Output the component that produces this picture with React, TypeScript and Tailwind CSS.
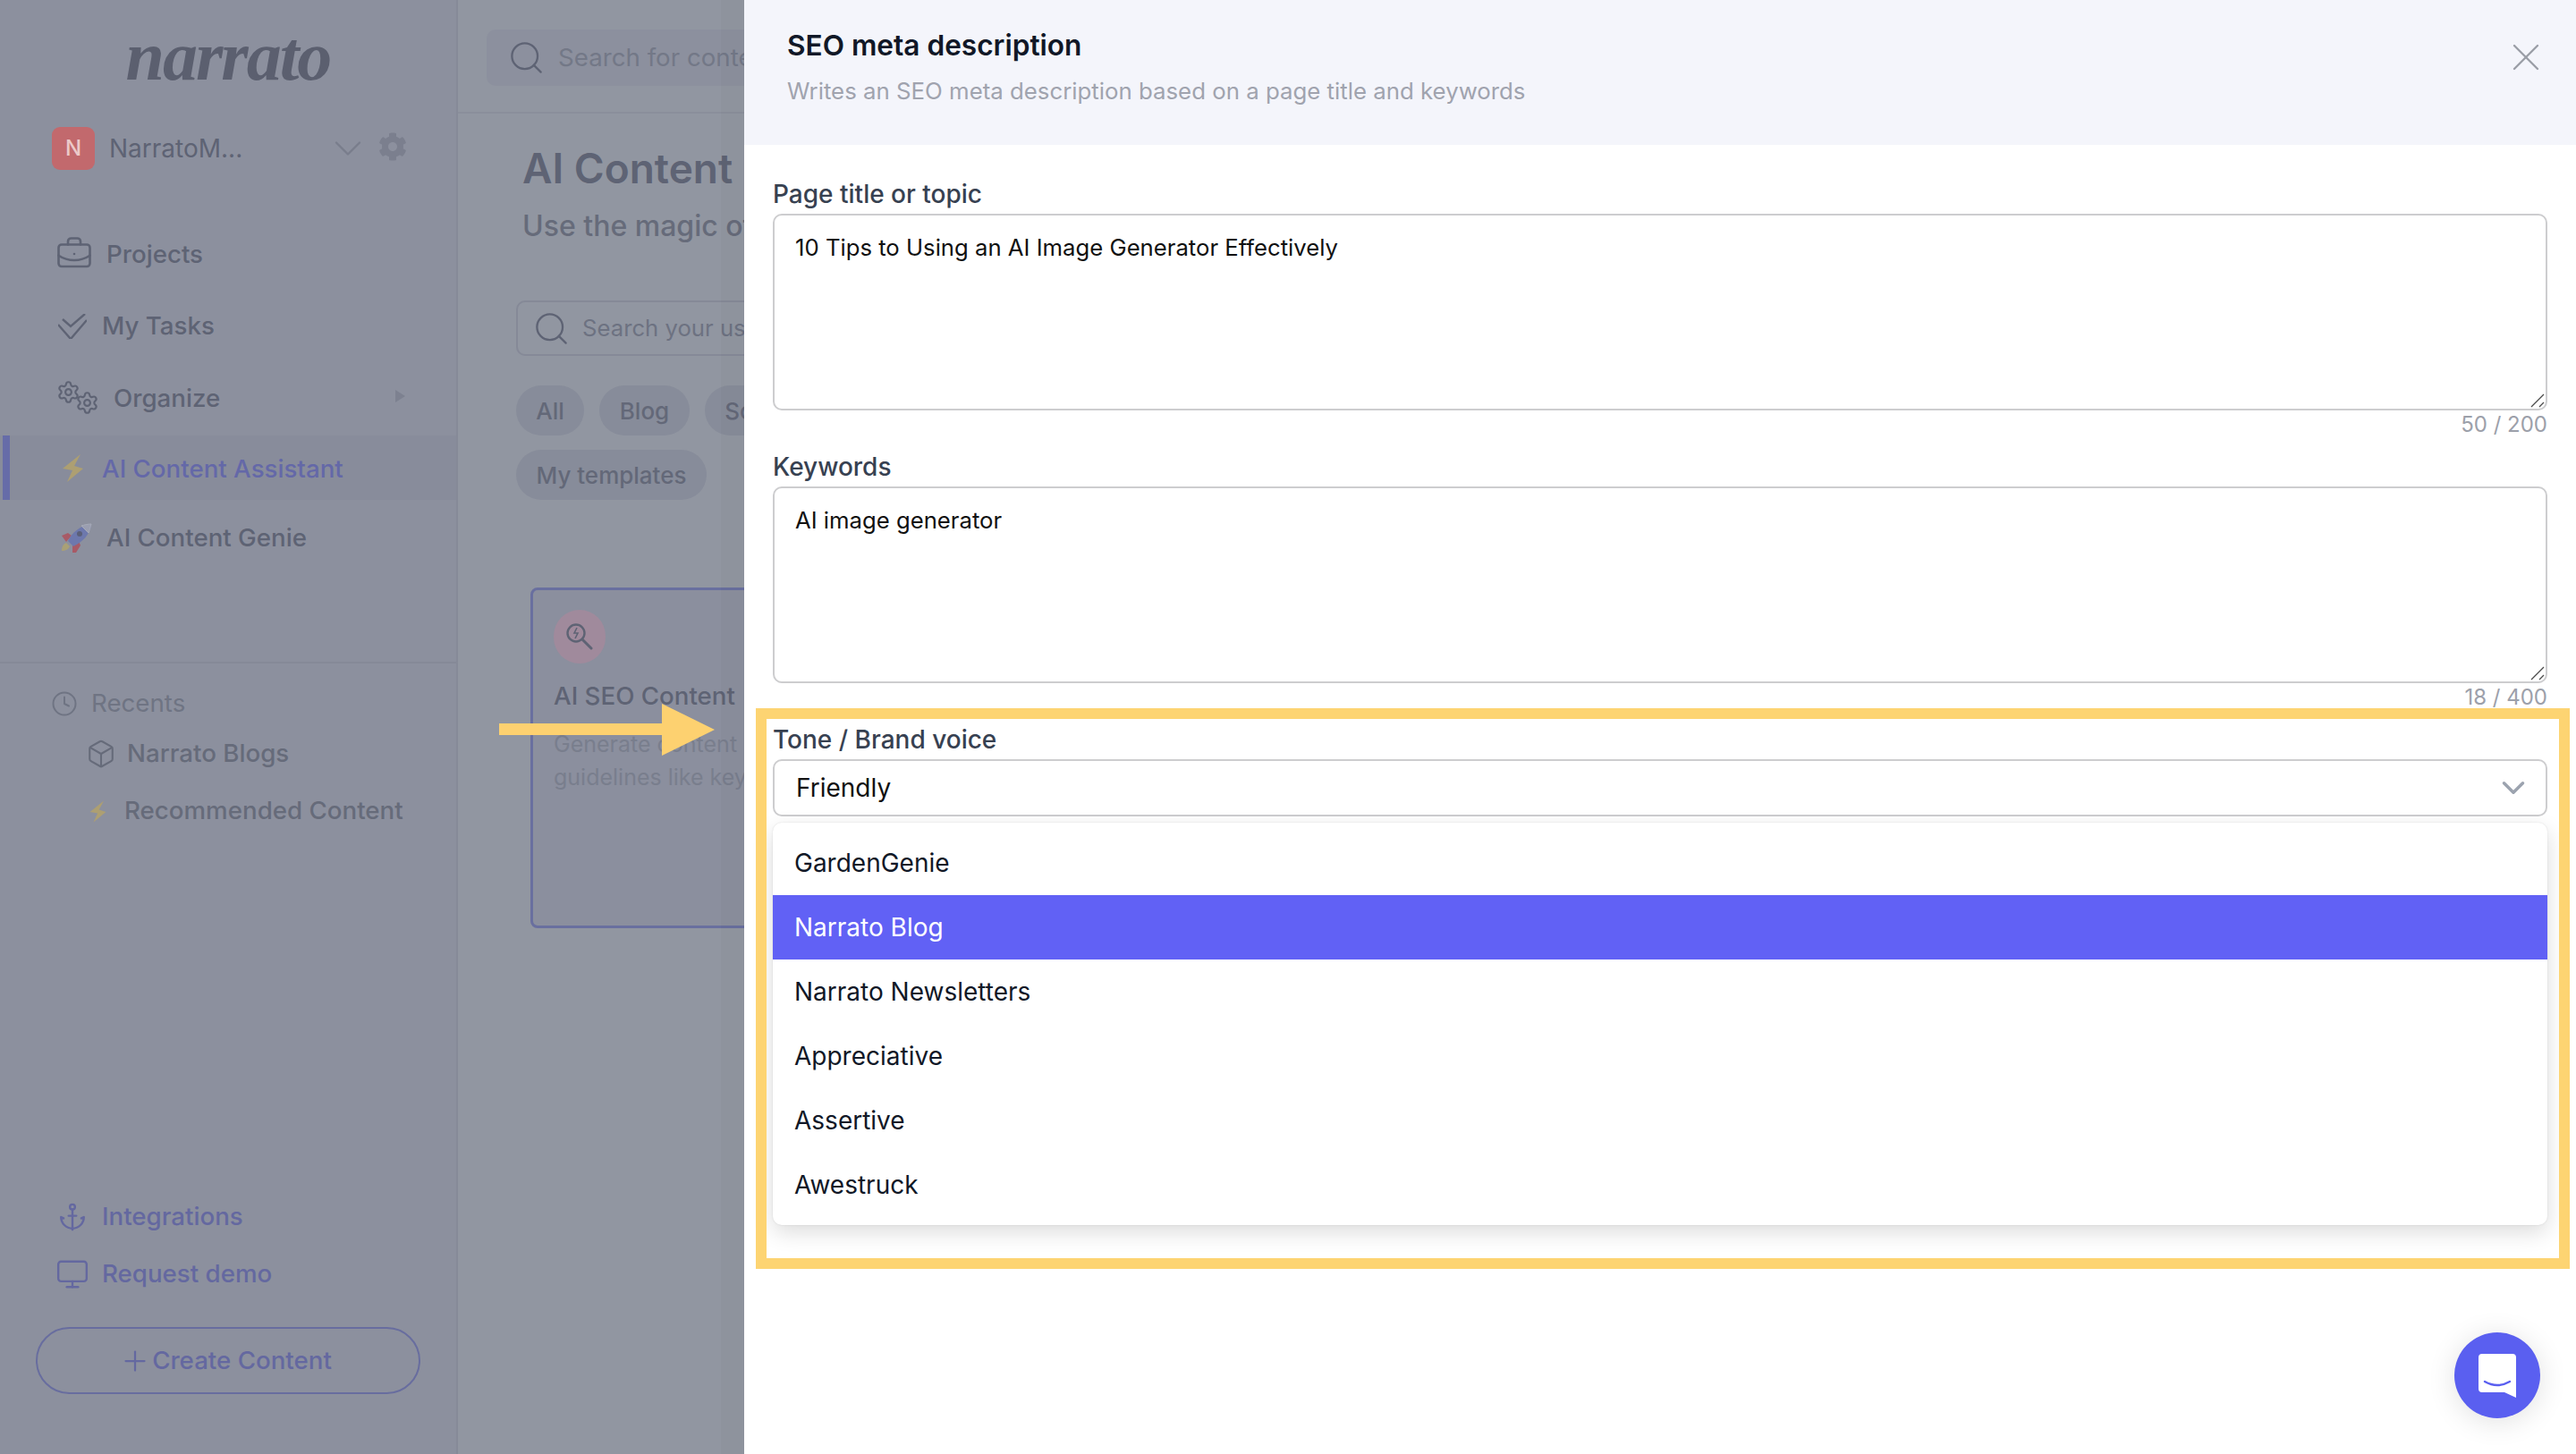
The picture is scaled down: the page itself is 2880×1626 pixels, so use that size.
import { Anchor, BriefcaseBusiness, ChevronDown, Box, Clock, Monitor, Plus, Search, Settings, X } from 'lucide-react';
import { FaCog } from 'react-icons/fa';

const fontInter = { fontFamily: 'Inter, "Noto Sans", sans-serif' };

function TasksIcon() {
  return (
    <svg viewBox="0 0 32 28" className="w-[32px] h-[28px] shrink-0" fill="none" stroke="#5e6374" strokeWidth="2.4">
      <path d="M0 12l14 16L32 7" />
      <path d="M5 6l9 8L30 0" />
    </svg>
  );
}

function OrganizeIcon() {
  return (
    <div className="flex shrink-0 mb-[3px]">
      <Settings className="w-[27px] h-[27px] text-[#5e6374]" strokeWidth={1.9} />
      <Settings className="w-[27px] h-[27px] -ml-[6px] mt-[12px] text-[#5e6374]" strokeWidth={1.9} />
    </div>
  );
}

function Bolt({ className }: { className: string }) {
  return (
    <svg viewBox="0 0 27 35" className={`shrink-0 ${className}`}>
      <path d="M22 2L2 18l11 2-6 13 18-15-10-3z" fill="#ad9f72" />
    </svg>
  );
}

function Rocket() {
  return (
    <svg viewBox="0 0 36 34" className="w-[36px] h-[34px] shrink-0">
      <path d="M2 31c0-5 2-8 5-9l4 4c-1 3-5 5-9 5z" fill="#a9a076" />
      <path d="M2 14l7-3 4 3-6 7z" fill="#a85a66" />
      <path d="M14 33l0-8 7-5 2 5-5 8z" fill="#a85a66" />
      <path d="M9 20C13 11 22 3 35 1c-1 12-10 20-20 25z" fill="#6d78ad" />
      <path d="M24 3c3-1 7-2 11-2-1 4-2 7-3 10z" fill="#9a9eb0" stroke="#a7abb8" strokeWidth="1" />
      <circle cx="22" cy="12" r="3" fill="#5b5f78" />
    </svg>
  );
}

function SeoIcon() {
  return (
    <svg viewBox="0 0 30 30" className="w-[30px] h-[30px]" fill="none" stroke="#5e6374">
      <circle cx="11" cy="11" r="9.5" strokeWidth="2.4" />
      <path d="M18 18l10 10" strokeWidth="3" strokeLinecap="round" />
      <path d="M12 5l-3 6h4l-3 6" strokeWidth="1.6" />
    </svg>
  );
}

function Sidebar() {
  return (
    <aside className="w-[512px] h-full shrink-0 flex flex-col bg-[#8c909e] border-r-2 border-[#868a98] text-[27.7px] font-medium text-[#5e6374]">
      <div className="h-[122px] pt-[24px] flex justify-center">
        <span className="text-[78px] leading-[78px] font-bold italic text-[#5b5f6f] tracking-[-2px]" style={{ fontFamily: '"Liberation Serif", serif' }}>narrato</span>
      </div>
      <div className="flex items-center h-[48px] mt-[20px] pl-[58px]">
        <div className="w-[48px] h-[48px] rounded-[9px] bg-[#c2696d] text-[#ecc9c9] text-[24px] flex items-center justify-center">N</div>
        <span className="ml-[16px] w-[241px] font-normal text-[28px]">NarratoM...</span>
        <ChevronDown className="w-[52px] h-[52px] text-[#797d8c] shrink-0" strokeWidth={1.1} />
        <FaCog className="ml-[8px] w-[32px] h-[32px] text-[#7b7f8e] shrink-0 mb-[4px]" />
      </div>

      <nav className="mt-[59px] flex flex-col">
        <div className="flex items-center h-[72px] pl-[62px]">
          <BriefcaseBusiness className="w-[42px] h-[42px] shrink-0 mb-[2px]" strokeWidth={1.5} />
          <span className="ml-[15px]">Projects</span>
        </div>
        <div className="flex items-center h-[72px] pl-[65px] mt-[8px]">
          <TasksIcon />
          <span className="ml-[17px]">My Tasks</span>
        </div>
        <div className="flex items-center h-[72px] pl-[63px] mt-[9px] pr-[57px]">
          <OrganizeIcon />
          <span className="ml-[16px]">Organize</span>
          <div className="ml-auto w-0 h-0 border-y-[7px] border-y-transparent border-l-[11px] border-l-[#7d8190] mb-[6px]" />
        </div>
        <div className="flex items-center h-[72px] mt-[5px] bg-[#888c9b] relative pl-[68px] pt-[4px]">
          <div className="absolute left-[3px] top-0 bottom-0 w-[8px] bg-[#666ca8]" />
          <Bolt className="w-[27px] h-[35px] mb-[4px]" />
          <span className="ml-[19px] text-[#6468a8]">AI Content Assistant</span>
        </div>
        <div className="flex items-center h-[72px] mt-[7px] pl-[67px]">
          <Rocket />
          <span className="ml-[16px]">AI Content Genie</span>
        </div>
      </nav>

      <div className="mt-[102px] border-t-2 border-[#858997] pt-[25px] text-[#666b7a]">
        <div className="flex items-center h-[40px] pl-[57px] text-[#6f7483] font-normal">
          <Clock className="w-[30px] h-[30px]" strokeWidth={1.6} />
          <span className="ml-[15px]">Recents</span>
        </div>
        <div className="flex items-center h-[40px] mt-[16px] pl-[96px]">
          <Box className="w-[34px] h-[34px]" strokeWidth={1.5} />
          <span className="ml-[12px]">Narrato Blogs</span>
        </div>
        <div className="flex items-center h-[40px] mt-[24px] pl-[99px]">
          <Bolt className="w-[21px] h-[27px]" />
          <span className="ml-[19px]">Recommended Content</span>
        </div>
      </div>

      <div className="mt-auto text-[#6468a0]">
        <div className="flex items-center h-[40px] pl-[64px]">
          <Anchor className="w-[34px] h-[34px]" strokeWidth={1.7} />
          <span className="ml-[16px]">Integrations</span>
        </div>
        <div className="flex items-center h-[40px] mt-[24px] pl-[62px]">
          <Monitor className="w-[38px] h-[38px]" strokeWidth={1.5} />
          <span className="ml-[14px]">Request demo</span>
        </div>
        <div className="mt-[39px] mb-[67px] ml-[40px] w-[430px] h-[75px] rounded-full border-2 border-[#686d9f] flex items-center justify-center pr-[6px]">
          <Plus className="w-[36px] h-[36px]" strokeWidth={1.5} />
          <span className="ml-[1px]">Create Content</span>
        </div>
      </div>
    </aside>
  );
}

function Chip({ label, className }: { label: string; className: string }) {
  return <div className={`h-[56px] rounded-full bg-[#878c9a] flex items-center justify-center text-[#636878] text-[26px] font-medium shrink-0 ${className}`}>{label}</div>;
}

function BackgroundPage() {
  return (
    <main className="w-[320px] h-full shrink-0 overflow-hidden bg-[#9196a1]">
      <div className="h-[127px] border-b-2 border-[#8a8e9b] pl-[32px] pt-[33px]">
        <div className="w-[400px] h-[63px] bg-[#8c909e] rounded-[10px] flex items-center pl-[23px]">
          <Search className="w-[43px] h-[43px] text-[#5e6374] shrink-0" strokeWidth={1.3} />
          <span className="ml-[14px] text-[27.7px] text-[#737887] whitespace-nowrap">Search for content</span>
        </div>
      </div>
      <div className="pl-[65px] whitespace-nowrap">
        <h1 className="ml-[7px] mt-[31px] h-[60px] leading-[60px] text-[46px] font-semibold text-[#5e6374]">AI Content</h1>
        <p className="ml-[7px] mt-[13px] h-[44px] leading-[44px] text-[32px] font-medium text-[#666b7a]">Use the magic of</p>
        <div className="mt-[61px] w-[400px] h-[62px] border-2 border-[#858997] rounded-[10px] flex items-center pl-[16px]">
          <Search className="w-[43px] h-[43px] text-[#5e6374] shrink-0" strokeWidth={1.3} />
          <span className="ml-[13px] text-[25.7px] text-[#6d7281]">Search your use</span>
        </div>
        <div className="mt-[33px] flex gap-[17px]">
          <Chip label="All" className="w-[76px]" />
          <Chip label="Blog" className="w-[101px]" />
          <Chip label="Social" className="w-[120px]" />
        </div>
        <div className="mt-[16px] flex">
          <Chip label="My templates" className="w-[213px]" />
        </div>
        <div className="ml-[16px] mt-[98px] w-[400px] h-[381px] rounded-[8px] border-[3px] border-[#696f9f] bg-[#8b8f9e] pl-[23px] pt-[22px]">
          <div className="w-[58px] h-[60px] rounded-full bg-[#a08a9c] flex items-center justify-center">
            <SeoIcon />
          </div>
          <div className="mt-[16px] text-[27.7px] font-medium text-[#5e6374]">AI SEO Content</div>
          <div className="mt-[14px] text-[25px] leading-[37px] text-[#797e8d]">
            <div>Generate content</div>
            <div>guidelines like key</div>
          </div>
        </div>
      </div>
    </main>
  );
}

function Field({ label, value, count, gapClass }: { label: string; value: string; count: string; gapClass: string }) {
  return (
    <div className={gapClass}>
      <label className="block h-[36px] leading-[36px] text-[28px] font-medium text-[#374151]">{label}</label>
      <div className="relative mt-[4px]">
        <textarea
          readOnly
          defaultValue={value}
          className="block w-full h-[220px] rounded-[10px] border-2 border-[#cdcdcf] bg-white px-[23px] py-[17px] text-[25.7px] leading-[38px] text-[#111] outline-none resize-none"
        />
        {/* resize grip */}
        <svg className="absolute right-[3px] bottom-[3px]" width="16" height="16" viewBox="0 0 16 16" stroke="#4b4b4b" strokeWidth="1.3">
          <path d="M1 15L15 1M10 15l5-5" />
        </svg>
      </div>
      <div className="h-[32px] leading-[32px] text-right text-[24px] text-[#9ca0aa]">{count}</div>
    </div>
  );
}

const toneOptions = ['GardenGenie', 'Narrato Blog', 'Narrato Newsletters', 'Appreciative', 'Assertive', 'Awestruck'];

function Drawer() {
  return (
    <section className="relative w-[2048px] h-full shrink-0 bg-white flex flex-col shadow-[-26px_0_0_rgba(0,0,0,0.02)]">
      <header className="h-[162px] bg-[#f4f5fb] pl-[48px] pr-[30px] flex justify-between">
        <div>
          <h2 className="mt-[31px] h-[40px] leading-[40px] text-[31.6px] font-semibold text-[#111827]">SEO meta description</h2>
          <p className="mt-[13px] h-[36px] leading-[36px] text-[25.8px] text-[#a0a3ae]">Writes an SEO meta description based on a page title and keywords</p>
        </div>
        <X className="mt-[38px] w-[52px] h-[52px] text-[#9a9da6]" strokeWidth={1.1} />
      </header>
      <div className="pl-[32px] pr-[32px] pt-[37px]">
        <Field label="Page title or topic" value="10 Tips to Using an AI Image Generator Effectively" count="50 / 200" gapClass="" />
        <Field label="Keywords" value="AI image generator" count="18 / 400" gapClass="mt-[13px]" />
        <div className="mt-[13px]">
          <label className="block h-[36px] leading-[36px] text-[28px] font-medium text-[#374151]">Tone / Brand voice</label>
          <div className="mt-[4px] h-[64px] rounded-[10px] border-2 border-[#cdcdcf] flex items-center justify-between pl-[24px] pr-[15px] text-[28px] text-[#111]">
            <span>Friendly</span>
            <ChevronDown className="w-[42px] h-[42px] text-[#9ca3af]" strokeWidth={2} />
          </div>
          <ul className="mt-[7px] h-[450px] py-[9px] rounded-[10px] bg-white shadow-[0_8px_24px_rgba(0,0,0,0.14),0_0_2px_rgba(0,0,0,0.12)] text-[28px] text-[#111827]">
            {toneOptions.map((option, i) => (
              <li key={option} className={`h-[72px] flex items-center pl-[24px] ${i === 1 ? 'bg-[#6161f5] text-white' : ''}`}>
                {option}
              </li>
            ))}
          </ul>
        </div>
      </div>
    </section>
  );
}

export default function App() {
  return (
    <div className="relative flex w-[2880px] h-[1626px] overflow-hidden" style={fontInter}>
      <Sidebar />
      <BackgroundPage />
      <Drawer />

      {/* annotation: highlight box + arrow */}
      <div className="absolute left-[845px] top-[792px] w-[2028px] h-[627px] border-[12px] border-[#fdd472]" />
      <svg className="absolute left-[558px] top-[787px]" width="241" height="58" viewBox="0 0 241 58">
        <path d="M0 22h182V0l59 29-59 29V35H0z" fill="#fdd170" />
      </svg>

      {/* chat launcher */}
      <div className="absolute left-[2744px] top-[1490px] w-[96px] h-[96px] rounded-full bg-[#5a5ff0] shadow-[0_4px_32px_rgba(0,0,0,0.12)] flex items-center justify-center">
        <svg width="42" height="49" viewBox="0 0 42 49">
          <path d="M4 0h34a4 4 0 0 1 4 4v45l-13-6H4a4 4 0 0 1-4-4V4a4 4 0 0 1 4-4z" fill="#fff" />
          <path d="M7 31q14 8 28 0" stroke="#5a5ff0" strokeWidth="2.4" fill="none" strokeLinecap="round" />
        </svg>
      </div>
    </div>
  );
}
